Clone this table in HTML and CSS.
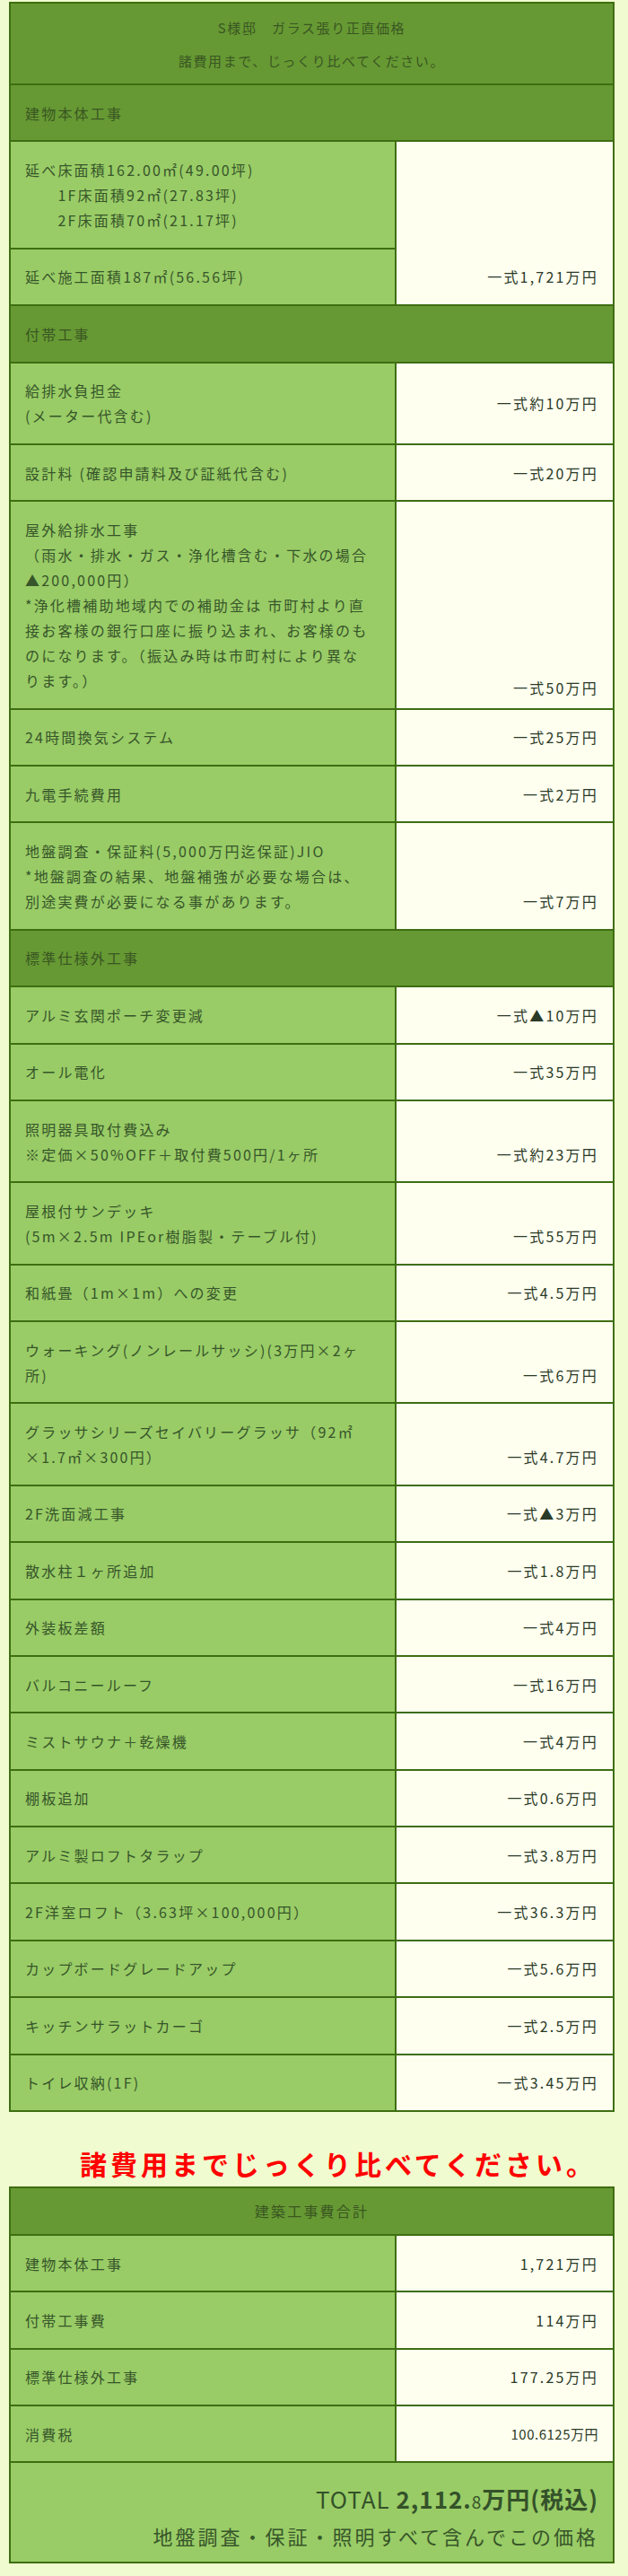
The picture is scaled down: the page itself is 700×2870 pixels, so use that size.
FILE: index.html
```html
<!DOCTYPE html>
<html lang="ja">
<head>
<meta charset="utf-8">
<title>S様邸 ガラス張り正直価格</title>
<link rel="stylesheet" href="styles.css">
</head>
<body>
<table class="estimate">
  <colgroup><col class="c-label"><col class="c-price"></colgroup>
  <tr><th colspan="2" class="title"><div>S様邸　ガラス張り正直価格</div><div>諸費用まで、じっくり比べてください。</div></th></tr>
  <tr><th colspan="2" class="section">建物本体工事</th></tr>
  <tr><td class="label">延べ床面積162.00㎡(49.00坪)<br>　　1F床面積92㎡(27.83坪)<br>　　2F床面積70㎡(21.17坪)</td><td class="price bottom" rowspan="2">一式1,721万円</td></tr>
  <tr><td class="label">延べ施工面積187㎡(56.56坪)</td></tr>

  <tr><th colspan="2" class="section">付帯工事</th></tr>
  <tr><td class="label">給排水負担金<br>(メーター代含む)</td><td class="price">一式約10万円</td></tr>
  <tr><td class="label">設計料 (確認申請料及び証紙代含む)</td><td class="price">一式20万円</td></tr>
  <tr><td class="label">屋外給排水工事<br>（雨水・排水・ガス・浄化槽含む・下水の場合<br>▲200,000円）<br>*浄化槽補助地域内での補助金は 市町村より直<br>接お客様の銀行口座に振り込まれ、お客様のも<br>のになります。（振込み時は市町村により異な<br>ります。）</td><td class="price bottom low">一式50万円</td></tr>
  <tr><td class="label">24時間換気システム</td><td class="price">一式25万円</td></tr>
  <tr><td class="label">九電手続費用</td><td class="price">一式2万円</td></tr>
  <tr><td class="label">地盤調査・保証料(5,000万円迄保証)JIO<br>*地盤調査の結果、地盤補強が必要な場合は、<br>別途実費が必要になる事があります。</td><td class="price bottom">一式7万円</td></tr>

  <tr><th colspan="2" class="section">標準仕様外工事</th></tr>
  <tr><td class="label">アルミ玄関ポーチ変更減</td><td class="price">一式▲10万円</td></tr>
  <tr><td class="label">オール電化</td><td class="price">一式35万円</td></tr>
  <tr><td class="label">照明器具取付費込み<br>※定価×50%OFF＋取付費500円/1ヶ所</td><td class="price bottom">一式約23万円</td></tr>
  <tr><td class="label">屋根付サンデッキ<br>(5m×2.5m IPEor樹脂製・テーブル付)</td><td class="price bottom">一式55万円</td></tr>
  <tr><td class="label">和紙畳（1m×1m）への変更</td><td class="price">一式4.5万円</td></tr>
  <tr><td class="label">ウォーキング(ノンレールサッシ)(3万円×2ヶ<br>所)</td><td class="price bottom">一式6万円</td></tr>
  <tr><td class="label">グラッサシリーズセイバリーグラッサ（92㎡<br>×1.7㎡×300円）</td><td class="price bottom">一式4.7万円</td></tr>
  <tr><td class="label">2F洗面減工事</td><td class="price">一式▲3万円</td></tr>
  <tr><td class="label">散水柱１ヶ所追加</td><td class="price">一式1.8万円</td></tr>
  <tr><td class="label">外装板差額</td><td class="price">一式4万円</td></tr>
  <tr><td class="label">バルコニールーフ</td><td class="price">一式16万円</td></tr>
  <tr><td class="label">ミストサウナ＋乾燥機</td><td class="price">一式4万円</td></tr>
  <tr><td class="label">棚板追加</td><td class="price">一式0.6万円</td></tr>
  <tr><td class="label">アルミ製ロフトタラップ</td><td class="price">一式3.8万円</td></tr>
  <tr><td class="label">2F洋室ロフト（3.63坪×100,000円）</td><td class="price">一式36.3万円</td></tr>
  <tr><td class="label">カップボードグレードアップ</td><td class="price">一式5.6万円</td></tr>
  <tr><td class="label">キッチンサラットカーゴ</td><td class="price">一式2.5万円</td></tr>
  <tr><td class="label">トイレ収納(1F)</td><td class="price">一式3.45万円</td></tr>
</table>

<p class="notice">諸費用までじっくり比べてください。</p>

<table class="estimate summary">
  <colgroup><col class="c-label"><col class="c-price"></colgroup>
  <tr><th colspan="2" class="sum-head">建築工事費合計</th></tr>
  <tr><td class="label">建物本体工事</td><td class="price">1,721万円</td></tr>
  <tr><td class="label">付帯工事費</td><td class="price">114万円</td></tr>
  <tr><td class="label">標準仕様外工事</td><td class="price">177.25万円</td></tr>
  <tr><td class="label">消費税</td><td class="price tax">100.6125万円</td></tr>
  <tr><td colspan="2" class="total">
    <div class="total-line">TOTAL <b>2,112.</b><span class="decimal">8</span><b>万円(税込)</b></div>
    <div class="total-note">地盤調査・保証・照明すべて含んでこの価格</div>
  </td></tr>
</table>
</body>
</html>
```

FILE: styles.css
```css
html {
  background: #f0fccf;
}

body {
  margin: 0;
  padding: 2px 15px 13px 10px;
  background: #f0fccf;
  font-family: "Noto Sans CJK JP", "Noto Sans", sans-serif;
  color: #37552a;
}

.estimate {
  width: 675px;
  border-collapse: collapse;
  border: 2px solid #3e6e12;
  font-size: 16px;
  line-height: 28px;
  letter-spacing: 2.2px;
}

.estimate th,
.estimate td {
  border: 2px solid #3e6e12;
  padding: 16.7px 16px;
}

.c-label {
  width: 430px;
}

.estimate .title {
  background: #669933;
  color: #3a5622;
  text-align: center;
  font-weight: normal;
  font-size: 15px;
  line-height: 37px;
  letter-spacing: 1.6px;
  padding-top: 7.5px;
  padding-bottom: 7.5px;
}

.estimate .section {
  background: #669933;
  color: #3a5622;
  text-align: left;
  font-weight: normal;
}

.estimate .label {
  background: #99cc66;
  color: #37552a;
  vertical-align: middle;
}

.estimate .price {
  background: #fffff0;
  color: #2a3a27;
  text-align: right;
  vertical-align: middle;
}

.estimate .price.bottom {
  vertical-align: bottom;
}

.estimate .price.low {
  padding-bottom: 9px;
}

.notice {
  margin: 37px 0 6px;
  padding-left: 79px;
  font-size: 30px;
  line-height: 40px;
  font-weight: bold;
  letter-spacing: 4px;
  color: #ff0000;
}

.summary .sum-head {
  background: #669933;
  color: #3a5622;
  text-align: center;
  font-weight: normal;
  padding-top: 11.5px;
  padding-bottom: 11.5px;
}

.estimate .price.tax {
  font-size: 15px;
  letter-spacing: 0.5px;
}

.estimate .total {
  background: #99cc66;
  text-align: right;
  padding: 21px 16px 10px;
}

.total-line {
  font-size: 26px;
  line-height: 38px;
  letter-spacing: 1px;
  color: #34522a;
}

.total-line b {
  font-weight: bold;
}

.total-line .decimal {
  font-size: 19px;
}

.total-note {
  font-size: 22px;
  line-height: 38px;
  letter-spacing: 3px;
  color: #37552a;
}
```
